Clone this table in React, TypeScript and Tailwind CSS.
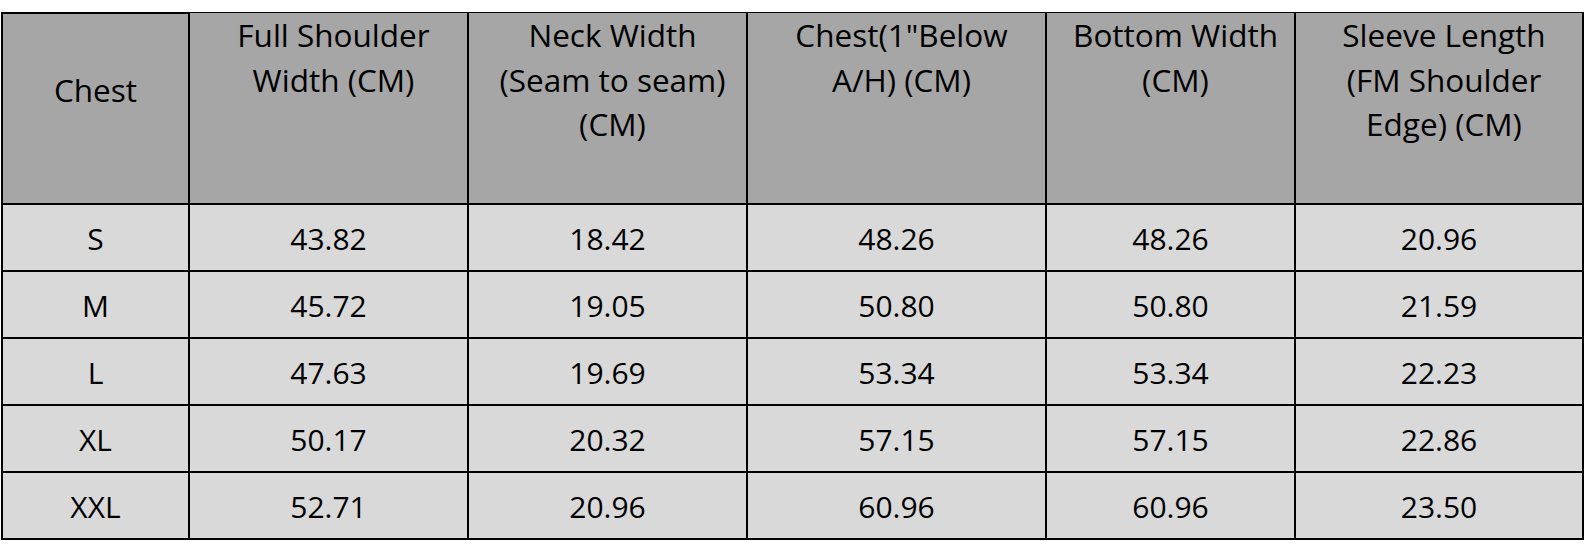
import React from "react";

const headers: { lines: string[]; first?: boolean }[] = [
  { lines: ["Chest"], first: true },
  { lines: ["Full Shoulder", "Width (CM)"] },
  { lines: ["Neck Width", "(Seam to seam)", "(CM)"] },
  { lines: ["Chest(1\"Below", "A/H) (CM)"] },
  { lines: ["Bottom Width", "(CM)"] },
  { lines: ["Sleeve Length", "(FM Shoulder", "Edge) (CM)"] },
];

const rows: string[][] = [
  ["S", "43.82", "18.42", "48.26", "48.26", "20.96"],
  ["M", "45.72", "19.05", "50.80", "50.80", "21.59"],
  ["L", "47.63", "19.69", "53.34", "53.34", "22.23"],
  ["XL", "50.17", "20.32", "57.15", "57.15", "22.86"],
  ["XXL", "52.71", "20.96", "60.96", "60.96", "23.50"],
];

export default function App() {
  return (
    <div className="w-[1586px] h-[549px] bg-white pt-[12px] pl-[1px]">
      <div
        className="w-[1583px] bg-black p-[2px] grid grid-cols-[185px_277px_277px_297px_247px_286px] grid-rows-[189px_65px_65px_65px_65px_65px] gap-[2px] text-black text-[30px] leading-[44.5px]"
        style={{ fontFamily: '"Open Sans", "Noto Sans", sans-serif' }}
      >
        {headers.map((h, i) => (
          <div
            key={i}
            className={
              h.first
                ? "bg-[#a6a6a6] text-center text-[31.5px] pt-[54px]"
                : "bg-[#a6a6a6] text-center text-[31.5px] pl-[10px] -mt-[1px]"
            }
          >
            {h.lines.map((l, j) => (
              <div key={j} className="whitespace-nowrap">
                {l}
              </div>
            ))}
          </div>
        ))}
        {rows.map((r, ri) =>
          r.map((c, ci) => (
            <div
              key={ri + "-" + ci}
              className="bg-[#d9d9d9] flex items-center justify-center pt-[3px]"
            >
              {c}
            </div>
          ))
        )}
      </div>
    </div>
  );
}
